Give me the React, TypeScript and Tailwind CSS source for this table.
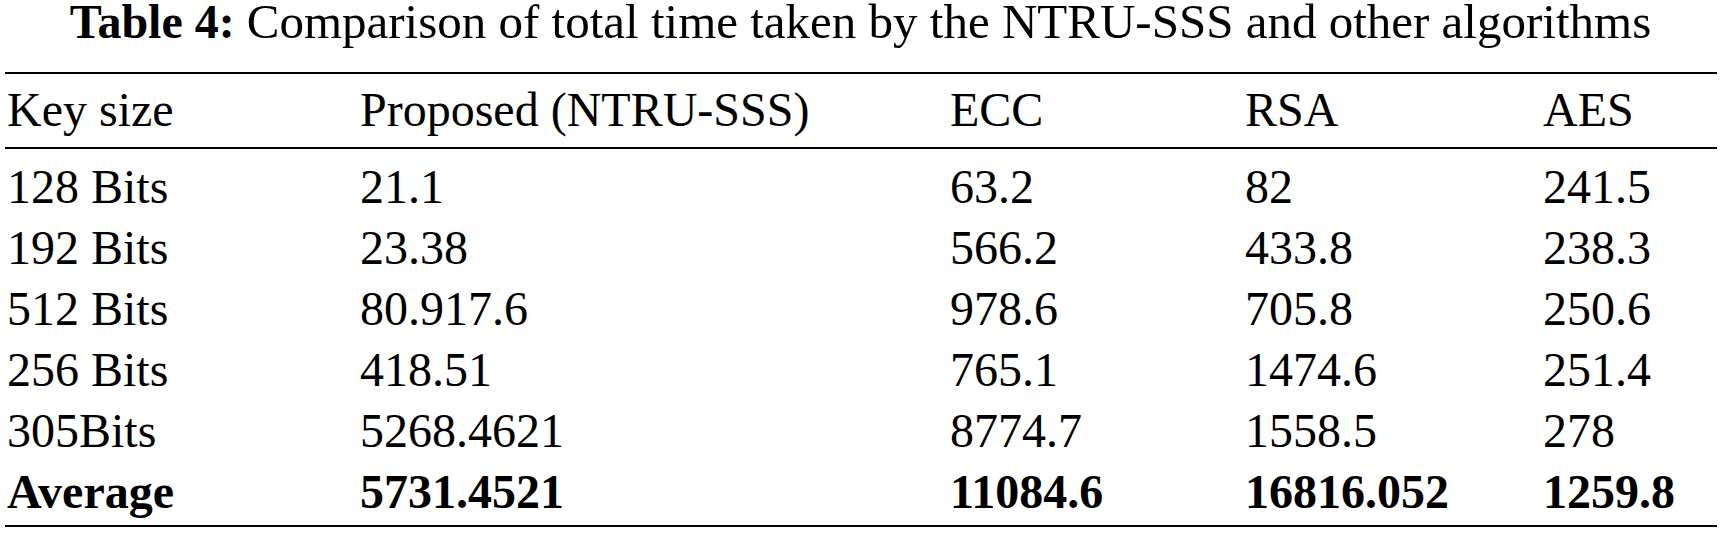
const HEADERS = ['Key size', 'Proposed (NTRU-SSS)', 'ECC', 'RSA', 'AES'];

const ROWS: string[][] = [
  ['128 Bits', '21.1', '63.2', '82', '241.5'],
  ['192 Bits', '23.38', '566.2', '433.8', '238.3'],
  ['512 Bits', '80.917.6', '978.6', '705.8', '250.6'],
  ['256 Bits', '418.51', '765.1', '1474.6', '251.4'],
  ['305Bits', '5268.4621', '8774.7', '1558.5', '278'],
];

const AVERAGE = ['Average', '5731.4521', '11084.6', '16816.052', '1259.8'];

const ROW = 'grid grid-cols-[353px_590px_295px_298px_1fr] pl-[2px] leading-[61px]';

export default function App() {
  return (
    <div
      className="h-[533px] w-[1721px] overflow-hidden bg-white text-black text-[48px]"
      style={{ fontFamily: '"Liberation Serif", "Times New Roman", serif' }}
    >
      <h1 className="text-center leading-[44px] font-normal">
        <span className="font-bold">Table 4:</span>
        <span className="ml-[12px] text-[49px]">
          Comparison of total time taken by the NTRU-SSS and other algorithms
        </span>
      </h1>

      <div className="ml-[5px] mt-[28px] w-[1712px]">
        <div className="h-[2px] bg-black" />
        <div className={`${ROW} pt-[5px] pb-[7px]`}>
          {HEADERS.map((h) => (
            <div key={h}>{h}</div>
          ))}
        </div>
        <div className="h-[2px] bg-black" />

        <div className="pt-[7px] pb-[3px]">
          {ROWS.map((row) => (
            <div key={row[0]} className={ROW}>
              {row.map((cell, i) => (
                <div key={i}>{cell}</div>
              ))}
            </div>
          ))}
          <div className={`${ROW} font-bold`}>
            {AVERAGE.map((cell, i) => (
              <div key={i}>{cell}</div>
            ))}
          </div>
        </div>
        <div className="h-[2px] bg-black" />
      </div>
    </div>
  );
}
